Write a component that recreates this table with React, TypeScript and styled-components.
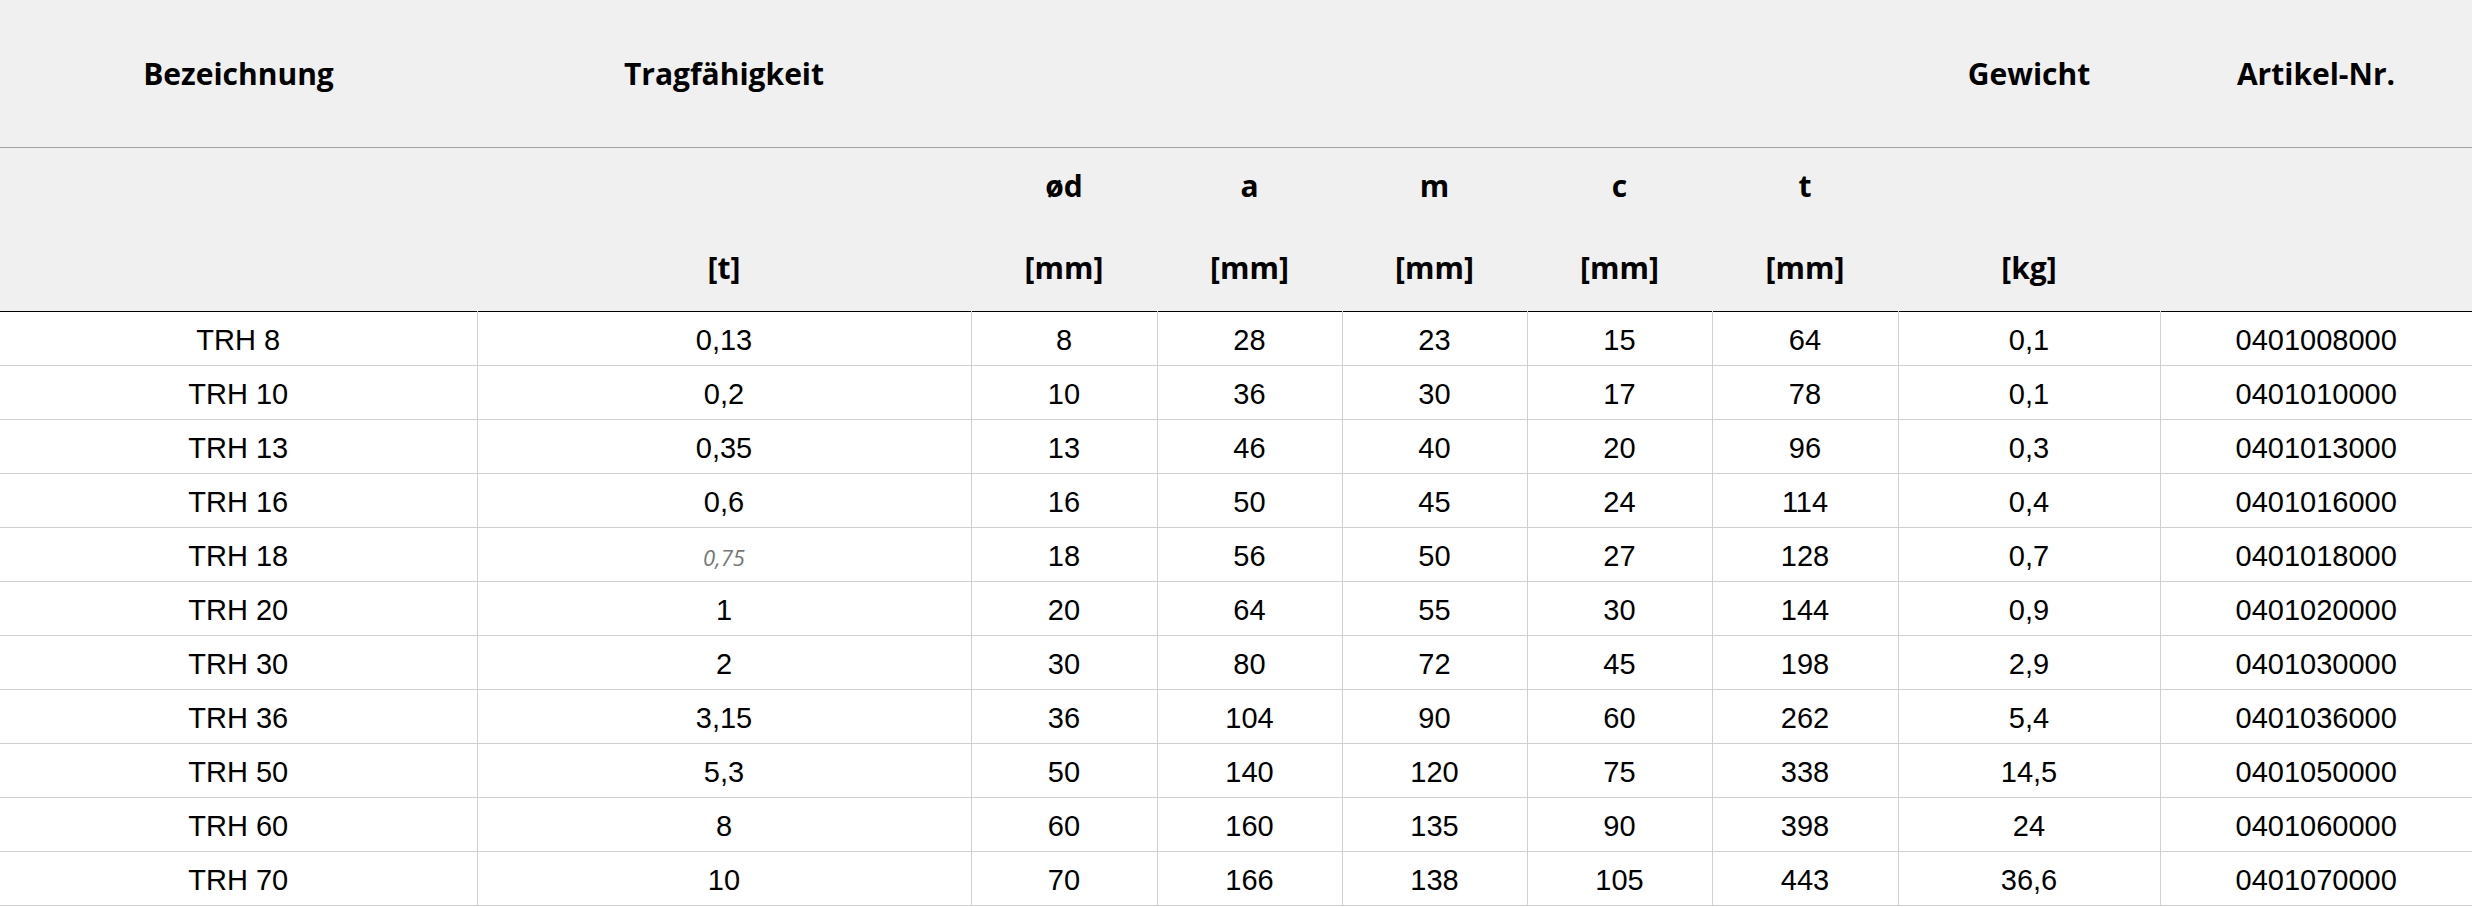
import styled, { createGlobalStyle } from "styled-components";

const GlobalStyle = createGlobalStyle`
  html, body {
    margin: 0;
    padding: 0;
    background: #ffffff;
  }
`;

const Table = styled.table`
  width: 100%;
  border-collapse: collapse;
  table-layout: fixed;
`;

const HeadRow = styled.tr<{ $tall?: boolean }>`
  background: #f0f0f0;
  height: ${(p) => (p.$tall ? "164px" : "147px")};
  border-bottom: 1px solid ${(p) => (p.$tall ? "#000000" : "#a3a3a3")};
`;

const HeadCell = styled.th`
  font-family: "Open Sans", "Noto Sans", sans-serif;
  font-weight: 700;
  font-size: 30px;
  color: #000;
  text-align: center;
  vertical-align: middle;
  padding: 0;
`;

const UnitStack = styled.div`
  display: flex;
  flex-direction: column;
  align-items: center;
  gap: 41px;
  line-height: 41px;
  padding-bottom: 5px;
`;

const Line = styled.span`
  display: block;
  height: 41px;
`;

const BodyRow = styled.tr`
  height: 54px;
  border-bottom: 1px solid #d0d0d0;
`;

const Cell = styled.td`
  font-family: "Liberation Sans", Arial, sans-serif;
  font-size: 29px;
  color: #000;
  text-align: center;
  vertical-align: middle;
  padding: 4px 0 0;
  border-left: 1px solid #d0d0d0;

  &:first-child {
    border-left: none;
  }
`;

const Note = styled.span`
  font-family: "Open Sans", "Noto Sans", sans-serif;
  font-style: italic;
  font-size: 22px;
  color: #777777;
`;

const widths = [477, 494, 186, 185, 185, 185, 186, 262, 312];

const dims = ["ød", "a", "m", "c", "t"];

type Row = [string, string, string, string, string, string, string, string, string];

const rows: Row[] = [
  ["TRH 8", "0,13", "8", "28", "23", "15", "64", "0,1", "0401008000"],
  ["TRH 10", "0,2", "10", "36", "30", "17", "78", "0,1", "0401010000"],
  ["TRH 13", "0,35", "13", "46", "40", "20", "96", "0,3", "0401013000"],
  ["TRH 16", "0,6", "16", "50", "45", "24", "114", "0,4", "0401016000"],
  ["TRH 18", "0,75", "18", "56", "50", "27", "128", "0,7", "0401018000"],
  ["TRH 20", "1", "20", "64", "55", "30", "144", "0,9", "0401020000"],
  ["TRH 30", "2", "30", "80", "72", "45", "198", "2,9", "0401030000"],
  ["TRH 36", "3,15", "36", "104", "90", "60", "262", "5,4", "0401036000"],
  ["TRH 50", "5,3", "50", "140", "120", "75", "338", "14,5", "0401050000"],
  ["TRH 60", "8", "60", "160", "135", "90", "398", "24", "0401060000"],
  ["TRH 70", "10", "70", "166", "138", "105", "443", "36,6", "0401070000"],
];

const noted = "TRH 18";

const Units = ({ top, bottom }: { top?: string; bottom?: string }) => (
  <UnitStack>
    <Line>{top}</Line>
    <Line>{bottom}</Line>
  </UnitStack>
);

export default function App() {
  return (
    <>
      <GlobalStyle />
      <Table>
        <colgroup>
          {widths.map((w, i) => (
            <col key={i} style={{ width: w }} />
          ))}
        </colgroup>
        <thead>
          <HeadRow>
            <HeadCell>Bezeichnung</HeadCell>
            <HeadCell>Tragfähigkeit</HeadCell>
            <HeadCell colSpan={5} />
            <HeadCell>Gewicht</HeadCell>
            <HeadCell>Artikel-Nr.</HeadCell>
          </HeadRow>
          <HeadRow $tall>
            <HeadCell />
            <HeadCell>
              <Units bottom="[t]" />
            </HeadCell>
            {dims.map((d) => (
              <HeadCell key={d}>
                <Units top={d} bottom="[mm]" />
              </HeadCell>
            ))}
            <HeadCell>
              <Units bottom="[kg]" />
            </HeadCell>
            <HeadCell />
          </HeadRow>
        </thead>
        <tbody>
          {rows.map((r) => (
            <BodyRow key={r[0]}>
              {r.map((v, i) => (
                <Cell key={i}>
                  {i === 1 && r[0] === noted ? <Note>{v}</Note> : v}
                </Cell>
              ))}
            </BodyRow>
          ))}
        </tbody>
      </Table>
    </>
  );
}
